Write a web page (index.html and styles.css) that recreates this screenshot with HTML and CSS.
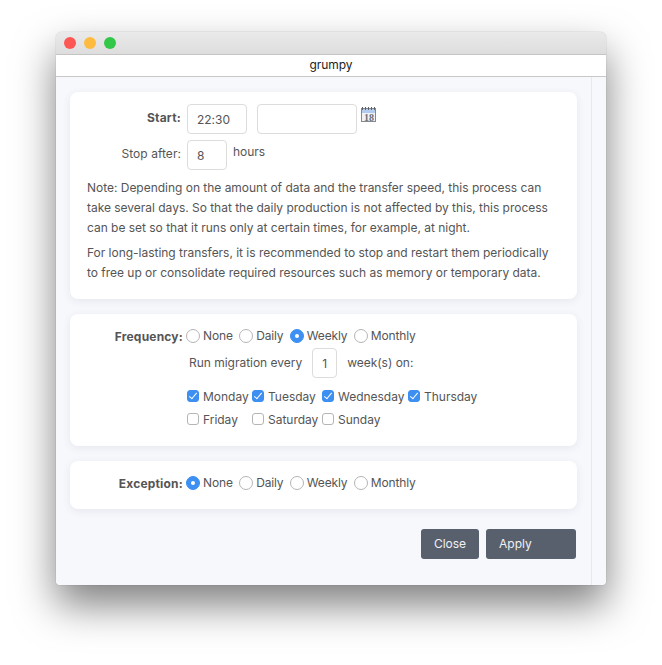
FILE: index.html
```html
<!DOCTYPE html>
<html lang="en">
<head>
    <meta charset="UTF-8">
    <title>grumpy</title>
    <link rel="stylesheet" href="styles.css">
</head>
<body>
    <div class="window">
        <div class="titlebar">
            <span class="light red"></span>
            <span class="light yellow"></span>
            <span class="light green"></span>
        </div>
        <div class="tabbar">grumpy</div>
        <div class="content">
            <div class="main">
                <div class="card card-start">
                    <div class="form-row row-start">
                        <label class="row-label strong">Start:</label>
                        <div class="field time">22:30</div>
                        <div class="field date"></div>
                        <svg class="cal" width="16" height="17" viewBox="0 0 16 17">
                            <rect x="0.5" y="2.5" width="14" height="13" fill="#f1f2f4" stroke="#85888c"/>
                            <rect x="1" y="3" width="13" height="4" fill="#b3cbef"/>
                            <path d="M1.5 1v3M4.5 1v3M7.5 1v3M10.5 1v3M13.5 1v3" stroke="#5f6266" stroke-width="1"/>
                            <text x="8" y="14.8" font-size="10" font-weight="700" text-anchor="middle" fill="#6a6e74" font-family="Liberation Serif, serif">18</text>
                        </svg>
                    </div>
                    <div class="form-row row-stop">
                        <label class="row-label">Stop after:</label>
                        <div class="field hours">8</div>
                        <span class="unit">hours</span>
                    </div>
                    <p class="note">Note: Depending on the amount of data and the transfer speed, this process can take several days. So that the daily production is not affected by this, this process can be set so that it runs only at certain times, for example, at night.</p>
                    <p class="note">For long-lasting transfers, it is recommended to stop and restart them periodically to free up or consolidate required resources such as memory or temporary data.</p>
                </div>

                <div class="card card-freq">
                    <div class="radio-row">
                        <label class="row-label strong">Frequency:</label>
                        <span class="radio"></span><span class="opt">None</span>
                        <span class="radio"></span><span class="opt">Daily</span>
                        <span class="radio on"></span><span class="opt">Weekly</span>
                        <span class="radio"></span><span class="opt">Monthly</span>
                    </div>
                    <div class="every-row">
                        <span class="every-text">Run migration every</span>
                        <div class="field weeks">1</div>
                        <span class="every-text">week(s) on:</span>
                    </div>
                    <div class="days">
                        <div class="day"><span class="check on"></span>Monday</div>
                        <div class="day"><span class="check on"></span>Tuesday</div>
                        <div class="day"><span class="check on"></span>Wednesday</div>
                        <div class="day"><span class="check on"></span>Thursday</div>
                        <div class="day"><span class="check"></span>Friday</div>
                        <div class="day"><span class="check"></span>Saturday</div>
                        <div class="day"><span class="check"></span>Sunday</div>
                    </div>
                </div>

                <div class="card card-exc">
                    <div class="radio-row">
                        <label class="row-label strong">Exception:</label>
                        <span class="radio on"></span><span class="opt">None</span>
                        <span class="radio"></span><span class="opt">Daily</span>
                        <span class="radio"></span><span class="opt">Weekly</span>
                        <span class="radio"></span><span class="opt">Monthly</span>
                    </div>
                </div>

                <div class="buttons">
                    <button class="btn btn-close">Close</button>
                    <button class="btn btn-apply">Apply</button>
                </div>
            </div>
            <div class="scrollbar"></div>
        </div>
    </div>
</body>
</html>
```

FILE: styles.css
```css
html, body { margin: 0; padding: 0; background: #fff; }
body { width: 662px; height: 665px; overflow: hidden; font-family: Inter, "Liberation Sans", sans-serif; font-size: 12px; letter-spacing: -0.02px; color: #555; }

.window { width: 550px; height: 553px; margin: 32px 0 0 56px; border-radius: 6px 6px 4px 4px; overflow: hidden; display: flex; flex-direction: column; box-shadow: 0 20px 40px rgba(0, 0, 0, 0.5), 0 0 1px rgba(0, 0, 0, 0.45); }

.titlebar { height: 22px; background: linear-gradient(#ebeaeb, #dedddE); border-bottom: 1px solid #c4c4c4; display: flex; align-items: center; gap: 8px; padding-left: 8px; }
.light { width: 12px; height: 12px; border-radius: 50%; }
.red { background: #fc5753; }
.yellow { background: #fdbc40; }
.green { background: #33c748; }

.tabbar { height: 21px; line-height: 20px; background: #fff; border-bottom: 1px solid #c8c8c8; text-align: center; color: #222; }

.content { flex: 1; display: flex; background: #f7f8fc; }
.main { flex: 1; padding: 15px 14px 0; }
.scrollbar { width: 14px; border-left: 1px solid #e9e9ec; }

.card { background: #fff; border-radius: 8px; box-shadow: 0 2px 8px rgba(60, 70, 100, 0.09); box-sizing: border-box; width: 507px; margin-bottom: 15px; }
.card-start { height: 207px; padding: 12px 17px 0; }
.card-freq { height: 132px; padding: 14px 0 0; }
.card-exc { height: 48px; padding: 14px 0 0; }

.form-row { display: flex; }
.row-label { width: 94px; text-align: right; flex: none; }
.strong { font-weight: 700; letter-spacing: 0.2px; }
.field { height: 30px; line-height: 30px; box-sizing: border-box; border: 1px solid #dcdcdc; border-radius: 4px; padding-left: 9px; background: #fff; }

.row-start { height: 30px; }
.row-start .row-label { line-height: 27px; margin-right: 6px; }
.time { width: 60px; margin-right: 10px; }
.date { width: 100px; }
.cal { margin: 2px 0 0 4px; }

.row-stop { margin-top: 6px; height: 30px; }
.row-stop .row-label { line-height: 28px; margin-right: 6px; letter-spacing: 0.05px; }
.hours { width: 40px; margin-right: 6px; }
.unit { line-height: 24px; }

.note { margin: 8px 0 0; line-height: 20px; }
.note + .note { margin-top: 5px; }

.radio-row { display: flex; align-items: center; height: 16px; }
.card .radio-row .row-label { width: 113px; margin-right: 3px; }
.radio { width: 14px; height: 14px; box-sizing: border-box; border: 1px solid #b5b5b5; border-radius: 50%; background: #fff; margin-right: 3px; position: relative; }
.radio.on { background: #3d8ff2; border-color: #3d8ff2; }
.radio.on::after { content: ""; position: absolute; left: 4px; top: 4px; width: 4px; height: 4px; border-radius: 50%; background: #fff; }
.opt { margin: 0 6.4px 2px 0; letter-spacing: -0.15px; }

.every-row { display: flex; align-items: center; margin: 4px 0 0 119px; height: 30px; }
.every-text { margin-bottom: 2px; }
.weeks { width: 25px; padding-left: 9px; margin: 0 10px; }

.days { display: grid; grid-template-columns: 65px 70px 86px 80px; row-gap: 7px; margin: 10px 0 0 117px; }
.day { display: flex; align-items: center; height: 16px; }
.check { width: 12px; height: 12px; box-sizing: border-box; border: 1px solid #b5b5b5; border-radius: 3px; margin-right: 4px; position: relative; }
.check.on { background: #3d8ff2; border-color: #3d8ff2; }
.check.on::after { content: ""; position: absolute; left: 3px; top: 0; width: 3px; height: 7px; border: solid #fff; border-width: 0 1.5px 1.5px 0; transform: rotate(40deg); }

.buttons { display: flex; justify-content: flex-end; gap: 7px; margin: 20px 1px 0 0; }
.btn { height: 30px; border: none; border-radius: 3px; background: #585f6d; color: #f0f1f3; font: 12px Inter, "Liberation Sans", sans-serif; padding: 0 0 2px; }
.btn-close { width: 58px; }
.btn-apply { width: 90px; text-align: left; padding-left: 13px; }
```
